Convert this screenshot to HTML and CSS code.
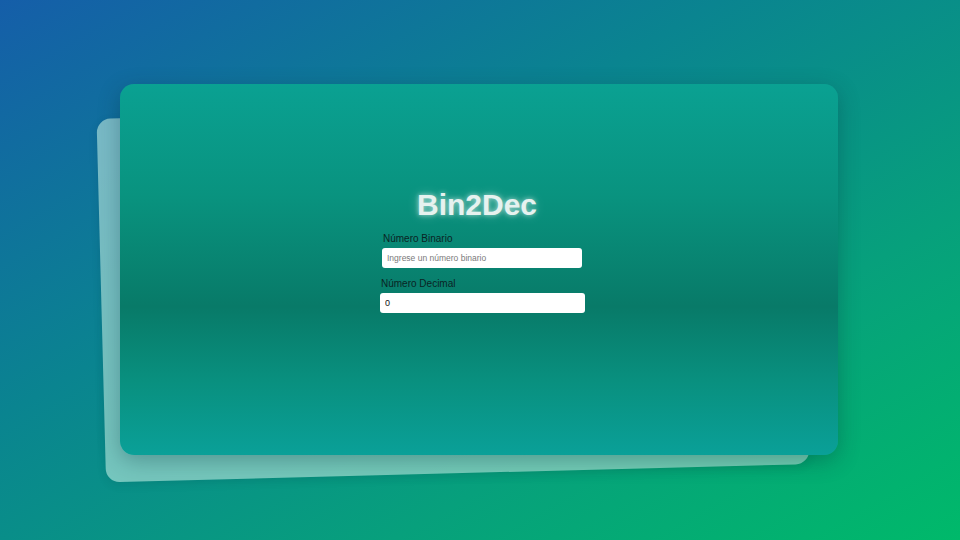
FILE: index.html
```html
<!DOCTYPE html>
<html lang="es">
<head>
<meta charset="utf-8">
<title>Bin2Dec</title>
<link rel="stylesheet" href="styles.css">
</head>
<body>
<main class="stage">
  <section class="card">
    <h1 class="title">Bin2Dec</h1>
    <form class="form">
      <div class="group group-bin">
        <label class="label" for="bin">Número Binario</label>
        <input class="input" id="bin" type="text" placeholder="Ingrese un número binario">
      </div>
      <div class="group group-dec">
        <label class="label" for="dec">Número Decimal</label>
        <input class="input input-value" id="dec" type="text" value="0" readonly>
      </div>
    </form>
  </section>
</main>
</body>
</html>
```

FILE: styles.css
```css
html, body {
  margin: 0;
  padding: 0;
  width: 960px;
  height: 540px;
  overflow: hidden;
}

body {
  font-family: "Liberation Sans", Arial, sans-serif;
  background: linear-gradient(150deg, #155ea9 0%, #0a8490 38%, #07a07c 70%, #00b96a 100%);
}

.stage {
  width: 960px;
  height: 540px;
  display: flex;
  justify-content: flex-start;
  align-items: flex-start;
  padding: 84px 0 0 120px;
  box-sizing: border-box;
}

.card {
  position: relative;
  width: 718px;
  height: 371px;
  box-sizing: border-box;
  border-radius: 14px;
  background: linear-gradient(to bottom, #0aa192 0%, #09937f 30%, #087a68 60%, #09907f 80%, #0aa098 100%);
  box-shadow: 0 6px 22px rgba(0, 40, 50, 0.3);
  display: flex;
  flex-direction: column;
  align-items: center;
  padding-top: 104px;
}

.card::before {
  content: "";
  position: absolute;
  inset: 0;
  border-radius: 14px;
  background: rgba(190, 235, 225, 0.6);
  transform: translate(-26px, 22px) rotate(-1.5deg) scale(0.98);
  z-index: -1;
  box-shadow: 0 3px 10px rgba(0, 40, 50, 0.1);
}

.title {
  margin: 0 4px 0 0;
  font-size: 30px;
  line-height: 34px;
  font-weight: bold;
  color: #e6f2ef;
  text-shadow: 0 0 5px rgba(255, 255, 255, 0.6), 0 0 12px rgba(255, 255, 255, 0.3);
}

.form {
  margin: 11px 0 0 7px;
  width: 205px;
  display: flex;
  flex-direction: column;
  gap: 10px;
}

.group {
  display: flex;
  flex-direction: column;
  gap: 3px;
}

.group-bin {
  width: 200px;
  margin-left: 2px;
}

.group-dec {
  width: 205px;
}

.label {
  font-size: 10px;
  line-height: 12px;
  color: #0a2424;
  padding-left: 1px;
}

.input {
  height: 20px;
  box-sizing: border-box;
  border: none;
  border-radius: 3px;
  background: #ffffff;
  padding: 0 5px;
  font-family: "Liberation Sans", Arial, sans-serif;
  font-size: 8.5px;
  color: #111;
  outline: none;
}

.input::placeholder {
  color: #7a7a7a;
}

.input-value {
  font-size: 9px;
}
```
